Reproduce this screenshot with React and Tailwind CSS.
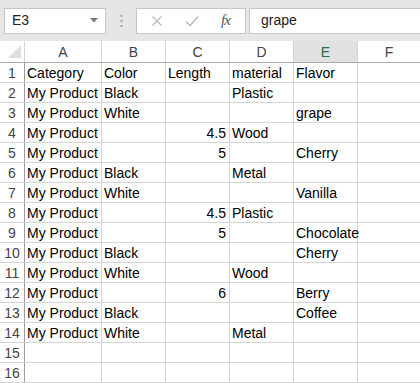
import React from 'react';

const COLS = [
    { key: 'A', w: 'w-[77px]' },
    { key: 'B', w: 'w-[64px]' },
    { key: 'C', w: 'w-[64px]' },
    { key: 'D', w: 'w-[64px]' },
    { key: 'E', w: 'w-[64px]' },
    { key: 'F', w: 'flex-1' },
];

// [A, B, C, D, E] — numbers in C are right aligned
const ROWS = [
    ['Category', 'Color', 'Length', 'material', 'Flavor'],
    ['My Product', 'Black', '', 'Plastic', ''],
    ['My Product', 'White', '', '', 'grape'],
    ['My Product', '', 4.5, 'Wood', ''],
    ['My Product', '', 5, '', 'Cherry'],
    ['My Product', 'Black', '', 'Metal', ''],
    ['My Product', 'White', '', '', 'Vanilla'],
    ['My Product', '', 4.5, 'Plastic', ''],
    ['My Product', '', 5, '', 'Chocolate'],
    ['My Product', 'Black', '', '', 'Cherry'],
    ['My Product', 'White', '', 'Wood', ''],
    ['My Product', '', 6, '', 'Berry'],
    ['My Product', 'Black', '', '', 'Coffee'],
    ['My Product', 'White', '', 'Metal', ''],
    ['', '', '', '', ''],
    ['', '', '', '', ''],
];

function FormulaBar() {
    return (
        <div className="h-[41px] bg-[#e6e6e6] flex items-center pl-[4px]">
            {/* Name box */}
            <div className="w-[102px] h-[26px] bg-white border border-[#c6c6c6] flex items-center justify-between pl-[7px] pr-[7px] text-[14px] text-[#222]">
                <span>E3</span>
                <svg width="8" height="5" viewBox="0 0 8 5">
                    <path d="M0 0 H8 L4 4.5 Z" fill="#777" />
                </svg>
            </div>

            {/* Splitter dots */}
            <div className="w-[30px] flex justify-center">
                <svg width="3" height="12" viewBox="0 0 3 12">
                    <rect x="0.5" y="0" width="2" height="2" fill="#a6a6a6" />
                    <rect x="0.5" y="5" width="2" height="2" fill="#a6a6a6" />
                    <rect x="0.5" y="10" width="2" height="2" fill="#a6a6a6" />
                </svg>
            </div>

            {/* Cancel / enter / fx */}
            <div className="w-[110px] h-[26px] bg-white border border-[#c6c6c6] flex items-center">
                <svg width="12" height="12" viewBox="0 0 12 12" className="ml-[14px]">
                    <path d="M1.5 1.5 L10.5 10.5 M10.5 1.5 L1.5 10.5" stroke="#bdbdbd" strokeWidth="1.4" />
                </svg>
                <svg width="14" height="12" viewBox="0 0 14 12" className="ml-[22px]">
                    <path d="M1 6.5 L5 10.5 L13 1.5" stroke="#bdbdbd" strokeWidth="1.6" fill="none" />
                </svg>
                <span className="ml-[22px] text-[15px] italic text-[#555] tracking-[-1px]" style={{ fontFamily: '"Liberation Serif", serif' }}>
                    fx
                </span>
            </div>

            {/* Formula input */}
            <div className="ml-[3px] flex-1 h-[26px] bg-white border-y border-l border-[#c6c6c6] flex items-center pl-[11px] text-[14px] text-[#222]">
                grape
            </div>
        </div>
    );
}

export default function App() {
    return (
        <div className="w-[420px] h-[383px] overflow-hidden bg-white select-none" style={{ fontFamily: '"Liberation Sans", Arial, sans-serif' }}>
            <FormulaBar />

            {/* Column headers */}
            <div className="flex h-[22px] border-b border-[#ababab] text-[14px] leading-[22px] text-[#444]">
                <div className="w-[25px] border-r border-[#d4d4d4] relative">
                    <svg width="14" height="14" viewBox="0 0 14 14" className="absolute left-[8px] top-[4px]">
                        <path d="M13 0 V13 H0 Z" fill="#dfdfdf" />
                    </svg>
                </div>
                {COLS.map((c) => (
                    <div
                        key={c.key}
                        className={
                            c.key === 'E'
                                ? `${c.w} text-center border-r border-[#d4d4d4] bg-[#e1e1e1] text-[#217346]`
                                : `${c.w} text-center ${c.key === 'F' ? '' : 'border-r border-[#d4d4d4]'}`
                        }
                    >
                        {c.key}
                    </div>
                ))}
            </div>

            {/* Rows */}
            {ROWS.map((row, i) => (
                <div key={i} className="flex h-[20px] border-b border-[#d4d4d4] text-[14px] leading-[21px]">
                    <div className="w-[25px] shrink-0 border-r border-[#9e9e9e] text-center text-[#444]">{i + 1}</div>
                    {COLS.map((c, j) => {
                        const v = j < 5 ? row[j] : '';
                        const isNum = typeof v === 'number';
                        return (
                            <div
                                key={c.key}
                                className={`${c.w} shrink-0 whitespace-nowrap text-black ${isNum ? 'text-right pr-[3px]' : 'pl-[2px]'} ${c.key === 'F' ? '' : 'border-r border-[#d4d4d4]'}`}
                            >
                                {v}
                            </div>
                        );
                    })}
                </div>
            ))}
        </div>
    );
}
